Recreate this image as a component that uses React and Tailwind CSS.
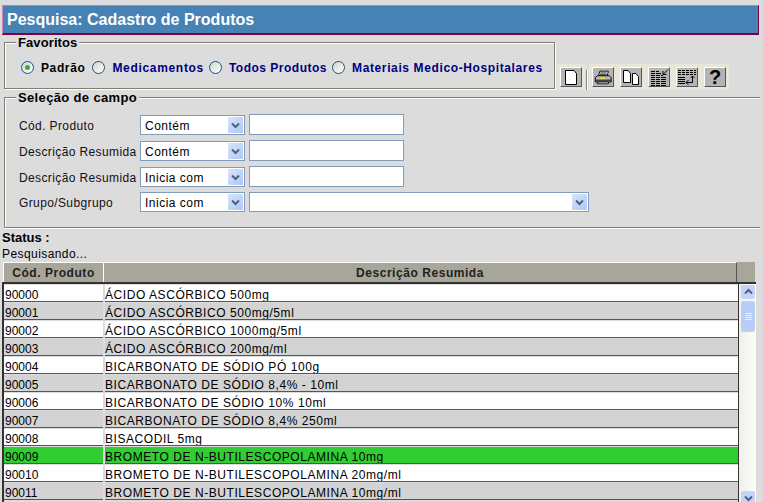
const rows = [
  ["90000", "ÁCIDO ASCÓRBICO 500mg"],
  ["90001", "ÁCIDO ASCÓRBICO 500mg/5ml"],
  ["90002", "ÁCIDO ASCÓRBICO 1000mg/5ml"],
  ["90003", "ÁCIDO ASCÓRBICO 200mg/ml"],
  ["90004", "BICARBONATO DE SÓDIO PÓ 100g"],
  ["90005", "BICARBONATO DE SÓDIO 8,4% - 10ml"],
  ["90006", "BICARBONATO DE SÓDIO 10% 10ml"],
  ["90007", "BICARBONATO DE SÓDIO 8,4% 250ml"],
  ["90008", "BISACODIL 5mg"],
  ["90009", "BROMETO DE N-BUTILESCOPOLAMINA 10mg"],
  ["90010", "BROMETO DE N-BUTILESCOPOLAMINA 20mg/ml"],
  ["90011", "BROMETO DE N-BUTILESCOPOLAMINA 10mg/ml"],
];

function Chevron({ up }) {
  return (
    <svg width="9" height="7" viewBox="0 0 9 7" className={up ? "rotate-180" : ""}>
      <path d="M1 1.5 L4.5 5 L8 1.5" fill="none" stroke="#4d6185" strokeWidth="2" />
    </svg>
  );
}

function Radio({ checked }) {
  return (
    <span className="flex h-[13px] w-[13px] shrink-0 items-center justify-center rounded-full border border-[#1c5180] bg-gradient-to-br from-[#d4d4cc] to-white">
      {checked && <span className="h-[5px] w-[5px] rounded-full bg-[#35b035]" />}
    </span>
  );
}

function Select({ value, w = "w-[105px]" }) {
  return (
    <div className={`flex ${w} h-[20px] items-center justify-between border border-[#7f9db9] bg-white pl-1 pr-px text-[12px] tracking-[0.5px] text-black`}>
      <span className="pt-px">{value}</span>
      <span className="flex h-[16px] w-[15px] items-center justify-center rounded-[1px] bg-gradient-to-br from-[#d8e4fb] to-[#b0c6f5]">
        <Chevron />
      </span>
    </div>
  );
}

function Field({ label, op, wide, mt }) {
  return (
    <div className={`flex h-[21px] items-end ${mt}`}>
      <span className="h-[20px] w-[121px] whitespace-nowrap text-[12px] leading-[23px] tracking-[0.38px] text-[#111]">{label}</span>
      <Select value={op} />
      {wide ? (
        <div className="ml-[4px]">
          <Select value="" w="w-[340px]" />
        </div>
      ) : (
        <input className="ml-[4px] h-[21px] w-[155px] border border-[#7f9db9] bg-white" />
      )}
    </div>
  );
}

function ToolButton({ children }) {
  return (
    <div className="border-[3px] border-[#e8e6d8]">
      <div className="flex h-[20px] w-[22px] items-center justify-center overflow-visible border border-b-[#555] border-l-white border-r-[#555] border-t-white bg-[#b4b4b4]">
        {children}
      </div>
    </div>
  );
}

const Page = ({ x = 0, y = 0, w = 9, h = 14 }) => (
  <path d={`M${x + 0.5} ${y + 0.5} H${x + w - 3} L${x + w - 0.5} ${y + 3.5} V${y + h - 0.5} H${x + 0.5} Z`} fill="#fff" stroke="#000" />
);

export default function App() {
  return (
    <div className="h-[502px] w-[763px] overflow-hidden bg-[#dcdcdc] font-['Liberation_Sans',Arial,sans-serif] text-[12px] text-black">
      <div className="px-[2px] pt-[5px]">
        <div className="flex h-[30px] w-[757px] items-center border-b-2 border-l border-r border-t border-b-[#800040] border-l-[#d080c0] border-r-[#800040] border-t-[#b080c8] bg-[#4682b4] pl-[4px] text-[16px] font-bold text-white">
          Pesquisa: Cadastro de Produtos
        </div>
      </div>

      <div className="flex h-[55px] items-start pl-[4px]">
        <fieldset className="h-[54px] w-[551px] border border-[#808070] pl-[11px] shadow-[inset_1px_1px_0_#fff,1px_1px_0_#fff]">
          <legend className="bg-[#dcdcdc] px-[2px] text-[13px] font-bold leading-[15px] tracking-[0.1px]">Favoritos</legend>
          <div className="flex h-[35px] items-center pl-[5px] text-[12px] font-bold leading-[16px] tracking-[0.62px] text-[#000080]">
            <Radio checked />
            <span className="ml-[7px] pt-px text-black">Padrão</span>
            <span className="ml-[7px]"><Radio /></span>
            <span className="ml-[7px] pt-px tracking-[0.68px]">Medicamentos</span>
            <span className="ml-[5px]"><Radio /></span>
            <span className="ml-[7px] pt-px tracking-[0.5px]">Todos Produtos</span>
            <span className="ml-[5px]"><Radio /></span>
            <span className="ml-[7px] pt-px">Materiais Medico-Hospitalares</span>
          </div>
        </fieldset>

        <div className="ml-[2px] mt-[29px] flex items-end">
          <ToolButton>
            <svg width="12" height="15"><Page w={12} h={15} /></svg>
          </ToolButton>
          <div className="mx-px h-[20px] w-[2px] border-l border-r border-l-[#888] border-r-white" />
          <ToolButton>
            <svg width="18" height="17" viewBox="0 0 20 17">
              <path d="M6.5 1.5 H16 L14.5 7 H5 Z" fill="#fff" stroke="#000" />
              <path d="M1.5 8.5 L4 6.5 H17 L19 8.5 V13.5 H1.5 Z" fill="#b4b4b4" stroke="#000" />
              <path d="M7 3.5 H14 M6.5 5.5 H14" stroke="#000" />
              <path d="M1.5 11.5 H19 M4 15.5 H16 V13.5 H4 Z" stroke="#000" fill="#fff" />
              <path d="M7 9.5 H12" stroke="#f0e020" strokeWidth="1.5" />
            </svg>
          </ToolButton>
          <ToolButton>
            <svg width="16" height="15">
              <Page w={8} h={13} />
              <Page x={9} y={3} w={7} h={12} />
            </svg>
          </ToolButton>
          <ToolButton>
            <svg width="19" height="17" viewBox="0 0 19 17">
              <path d="M1 2.5 H9 M1 4.5 H11 M1 6.5 H13 M1 8.5 H16 M1 10.5 H16 M1 12.5 H16 M1 14.5 H16 M1 16.5 H16" stroke="#000" />
              <path d="M5.5 2 V17 M10.5 5 V17" stroke="#b4b4b4" />
              <path d="M18 0.5 L13.5 5 M13 2 V5.5 H16.5" stroke="#000" fill="none" />
            </svg>
          </ToolButton>
          <ToolButton>
            <svg width="19" height="17" viewBox="0 0 19 17">
              <path d="M0 1.5 H18" stroke="#000" strokeDasharray="3 1" />
              <path d="M0 3.5 H18" stroke="#000" strokeDasharray="3 1" />
              <path d="M0 5.5 H18" stroke="#000" strokeDasharray="3 1" />
              <path d="M0 8.5 H7 M0 10.5 H7 M0 12.5 H7 M0 14.5 H7" stroke="#000" />
              <path d="M14.5 7 V13.5 H8 M10.5 11 L8 13.5 L10.5 16 M12.5 9 L14.5 7 L16.5 9" stroke="#000" fill="none" />
            </svg>
          </ToolButton>
          <ToolButton>
            <span className="text-[20px] font-bold leading-none">?</span>
          </ToolButton>
        </div>
      </div>

      <fieldset className="ml-[4px] h-[138px] w-[756px] border-b border-l border-t border-[#808070] pl-[14px] shadow-[inset_1px_1px_0_#fff,0_1px_0_#fff]">
        <legend className="ml-[-3px] bg-[#dcdcdc] px-[2px] text-[13px] font-bold leading-[15px] tracking-[0.35px]">Seleção de campo</legend>
        <div className="flex flex-col pt-[9px]">
          <Field label="Cód. Produto" op="Contém" />
          <Field label="Descrição Resumida" op="Contém" mt="mt-[5px]" />
          <Field label="Descrição Resumida" op="Inicia com" mt="mt-[5px]" />
          <Field label="Grupo/Subgrupo" op="Inicia com" wide mt="mt-[4px]" />
        </div>
      </fieldset>

      <div className="pl-[2px] pt-[3px]">
        <div className="text-[13px] font-bold leading-[14px]">Status :</div>
        <div className="mt-[2px] text-[12px] leading-[14px] tracking-[0.42px]">Pesquisando...</div>
      </div>

      <div className="ml-[3px] mt-px flex h-[20px] w-[752px] text-[12px] font-bold tracking-[0.55px] text-[#222]">
        <div className="flex w-[100px] items-center justify-center border-l border-t border-l-white border-t-white bg-[#a8a698]">Cód. Produto</div>
        <div className="flex w-[634px] items-center justify-center border-l border-t border-r border-l-white border-t-white border-r-[#555] bg-[#a8a698]">Descrição Resumida</div>
        <div className="flex-1 bg-[#a8a698]" />
      </div>

      <div className="ml-[2px] flex h-[220px] w-[754px] border-l-2 border-t-2 border-[#333]">
        <div className="flex w-[734px] flex-col pt-px">
          {rows.map(([code, desc]) => {
            const bg = code === "90009" ? "bg-[#32cd32]" : Number(code) % 2 === 0 ? "bg-white" : "bg-[#d3d3d3]";
            const cell = `h-[17px] overflow-hidden whitespace-nowrap border-b border-b-[#555] text-[12px] leading-[20px] ${bg}`;
            return (
              <div key={code} className="flex h-[18px] shrink-0">
                <div className={`${cell} w-[99px] pl-px`}>{code}</div>
                <div className={`${cell} ml-[2px] flex-1 tracking-[0.56px]`}>{desc}</div>
              </div>
            );
          })}
        </div>
        <div className="flex w-[18px] flex-col border-l border-[#333] bg-gradient-to-r from-[#f0f0ea] to-[#fcfcf8] pl-[2px] pt-px">
          <div className="flex h-[15px] w-[14px] items-center justify-center rounded-[2px] bg-[#c4d4f8]"><Chevron up /></div>
          <div className="mt-[2px] flex h-[34px] w-[14px] flex-col items-center justify-center gap-[1px] rounded-[2px] border border-[#c0d0f0] bg-[#b8ccf8]">
            <span className="h-px w-[7px] bg-[#e8f0ff]" />
            <span className="h-px w-[7px] bg-[#e8f0ff]" />
            <span className="h-px w-[7px] bg-[#e8f0ff]" />
            <span className="h-px w-[7px] bg-[#e8f0ff]" />
          </div>
          <div className="mt-[155px] flex h-[15px] w-[14px] shrink-0 translate-y-[4px] items-center justify-center rounded-[2px] bg-[#c4d4f8]"><Chevron /></div>
        </div>
      </div>
    </div>
  );
}
